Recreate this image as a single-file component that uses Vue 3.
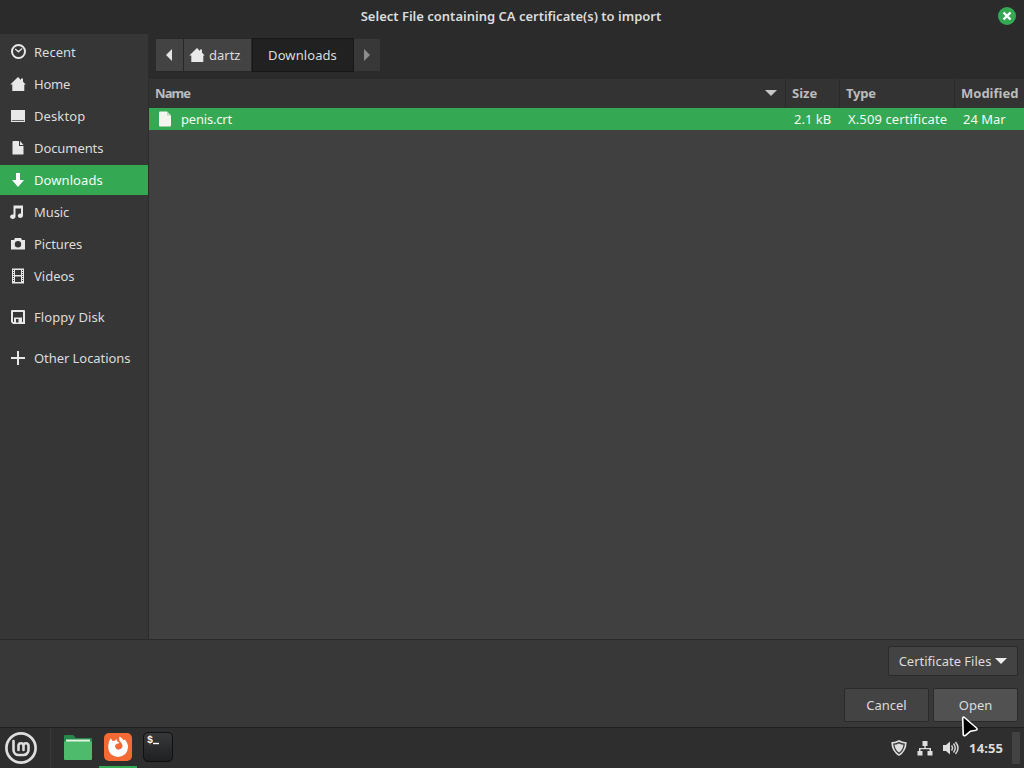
<template>
  <div class="screen">
    <header class="titlebar">
      <h1>Select File containing CA certificate(s) to import</h1>
      <button class="close" aria-label="Close">
        <svg width="18" height="18" viewBox="0 0 18 18">
          <circle cx="9" cy="9" r="9" fill="#35a854" />
          <path d="M5.500 5.500l7 7M12.500 5.500l-7 7" stroke="#fff" stroke-width="2.400" />
        </svg>
      </button>
    </header>

    <main class="chooser">
      <!-- Places -->
      <nav class="sidebar">
        <div
          v-for="place in places"
          :key="place.name"
          class="place"
          :class="{ selected: place.name === current, spaced: place.spaced }"
          @click="current = place.name"
        >
          <svg class="place-icon" width="16" height="16" viewBox="0 0 16 16">
            <path :d="place.icon" fill="currentColor" fill-rule="evenodd" />
          </svg>
          <span :style="{ letterSpacing: (place.ls || 0) + 'px' }">{{ place.name }}</span>
        </div>
      </nav>

      <section class="browser">
        <div class="pathbar">
          <button class="crumb arrow">
            <svg width="6" height="12" viewBox="0 0 6 12"><path d="M6 0v12L0 6z" fill="#e4e4e4" /></svg>
          </button>
          <button class="crumb home">
            <svg width="16" height="16" viewBox="0 0 16 16"><path :d="homeIcon" fill="#e8e8e8" /></svg>
            <span>dartz</span>
          </button>
          <button class="crumb active"><span>Downloads</span></button>
          <button class="crumb arrow last">
            <svg width="6" height="12" viewBox="0 0 6 12"><path d="M0 0v12l6-6z" fill="#8d8d8d" /></svg>
          </button>
        </div>

        <div class="files">
          <div class="row head">
            <div class="cell name">
              <span>Name</span>
              <svg width="12" height="6" viewBox="0 0 12 6"><path d="M0 0h12L6 6z" fill="#c8c8c8" /></svg>
            </div>
            <div class="cell">Size</div>
            <div class="cell type">Type</div>
            <div class="cell">Modified</div>
          </div>
          <div v-for="file in files" :key="file.name" class="row file">
            <div class="cell name">
              <svg width="12" height="16" viewBox="0 0 12 16">
                <path d="M0 1.500Q0 .5 1 .5h7l4 4V14.500q0 1-1 1H1q-1 0-1-1z" fill="#f3f5ee" />
                <path d="M8 .5l4 4H8z" fill="#b9d9b8" />
              </svg>
              <span>{{ file.name }}</span>
            </div>
            <div class="cell">{{ file.size }}</div>
            <div class="cell type">{{ file.type }}</div>
            <div class="cell">{{ file.modified }}</div>
          </div>
        </div>
      </section>
    </main>

    <footer class="actions">
      <button class="btn filter">
        <span>Certificate Files</span>
        <svg width="12" height="6" viewBox="0 0 12 6"><path d="M0 0h12L6 6z" fill="#eee" /></svg>
      </button>
      <div class="buttons">
        <button class="btn">Cancel</button>
        <button class="btn open">Open</button>
      </div>
    </footer>

    <!-- Panel -->
    <div class="panel">
      <div class="menu">
        <svg width="32" height="32" viewBox="0 0 32 32" fill="none" stroke="#dedede">
          <circle cx="16" cy="16" r="14.600" stroke-width="2.700" />
          <path d="M8.500 9v9a5 5 0 0 0 5 5h5a5 5 0 0 0 5-5v-4.300a2.500 2.500 0 0 0-5 0V18M18.500 13.700a2.500 2.500 0 0 0-5 0V18" stroke-width="2.600" stroke-linecap="round" />
        </svg>
      </div>
      <div class="launchers">
        <div class="launcher">
          <svg width="28" height="26" viewBox="0 0 28 26">
            <path d="M0 2q0-1 1-1h8l3 3h15q1 0 1 1v8H0z" fill="#25874a" />
            <rect x="2" y="5.500" width="24" height="4" rx=".5" fill="#e6f5e3" />
            <path d="M0 7.500h28V25q0 1-1 1H1q-1 0-1-1z" fill="#4dba6c" />
          </svg>
        </div>
        <div class="launcher running">
          <svg width="28" height="28" viewBox="0 0 28 28">
            <rect width="28" height="28" rx="5" fill="#f46a35" />
            <path d="M6.800 5.300L8.500 8 10.800 7.800 12.500 6 13.200 8.200 15.600 10 12 11.300Q10.500 12.500 11.300 14.600 12.500 17 15 16.600 18.500 16 18.600 12.600 18 9.800 15.300 7.500L15.300 3.500Q18 4.700 19.300 7L20.800 6.800Q24 9.800 24 14.300 23.300 23.500 14 23.900 4.700 23.400 4.200 14.500 4.300 8.500 6.800 5.300z" fill="#fff" />
          </svg>
        </div>
        <div class="launcher">
          <svg width="30" height="30" viewBox="0 0 30 30">
            <defs>
              <linearGradient id="term" x1="0" y1="0" x2="0" y2="1">
                <stop offset="0" stop-color="#37393a" />
                <stop offset="1" stop-color="#1d1f20" />
              </linearGradient>
            </defs>
            <rect x=".5" y=".5" width="29" height="29" rx="4.500" fill="url(#term)" stroke="#101112" />
            <text x="4" y="11" class="prompt">$</text>
            <path d="M10 11.500h6" stroke="#fff" stroke-width="1.400" />
          </svg>
        </div>
      </div>
      <div class="tray">
        <svg width="16" height="16" viewBox="0 0 16 16">
          <path d="M8 0Q11 2 15.700 2.200 15.500 11.500 8 16 .5 11.500.3 2.200 5 2 8 0z" fill="#dedede" />
          <path d="M8 2.600Q10.500 4 13.200 4.200 12.500 10.500 8 13.500 3.500 10.500 2.800 4.200 5.500 4 8 2.600z" fill="none" stroke="#3a3a3a" stroke-width="1.300" />
        </svg>
        <svg width="16" height="16" viewBox="0 0 16 16" fill="#dedede">
          <path d="M5.500 1h5v5H8.700v2H14v3h1.500v4.500h-5V11h2V9.300h-9V11h2v4.500h-5V11H2V8h5.300V6H5.500z" />
        </svg>
        <svg width="16" height="16" viewBox="0 0 16 16">
          <path d="M0 5h3l4-3.500v13L3 11H0z" fill="#dedede" />
          <path d="M8.500 5.500q2 2.500 0 5M10.500 3.500q3.500 4.500 0 9M12.500 2q5 6 0 12" fill="none" stroke="#d4d4d4" stroke-width="1.500" />
        </svg>
        <span class="clock">14:55</span>
      </div>
      <div class="corner"></div>
    </div>

    <svg class="pointer" width="20" height="24" viewBox="0 0 20 24">
      <path d="M2.700 3.300Q2.700 1.300 4.400 2.500L16.500 13Q18 14.700 15.800 15.200L10.500 16.200 5.600 20.300Q3.400 21.600 3.200 19.100z" fill="#000" stroke="#fff" stroke-width="1.600" stroke-linejoin="round" />
    </svg>
  </div>
</template>

<script setup>
import { ref } from 'vue'

const homeIcon = 'M8 1L.3 8.500h2V15h12V8.500h1.500L13 5.700V2.500h-2v1.400z'

const current = ref('Downloads')

// ls: letter spacing of the label
const places = [
  { name: 'Recent', icon: 'M8.500 0a7.500 7.500 0 1 1 0 15a7.500 7.500 0 1 1 0-15zM8.500 2a5.500 5.500 0 1 0 0 11a5.500 5.500 0 1 0 0-11zM5.500 4.500l3 2.300 3.300-2.800.7.900-4 3.800-3.700-3.100z' },
  { name: 'Home', ls: -0.2, icon: homeIcon },
  { name: 'Desktop', ls: 0.1, icon: 'M1 2h14v12H1zM1.800 12v.8h12.400V12z' },
  { name: 'Documents', ls: -0.08, icon: 'M3.500 1H9v5h4.500v8.500H2.500V2q0-1 1-1zM10 1l3.500 4H10z' },
  { name: 'Downloads', ls: 0.08, icon: 'M6 1h4v7h4L8 15 2 8h4z' },
  { name: 'Music', ls: -0.1, icon: 'M3.500 1.500h9.500v10.300a2.600 2.200 0 1 1-2-2.200V4.500H5.500v8.300a2.700 2.200 0 1 1-2-2.200z' },
  { name: 'Pictures', ls: -0.1, icon: 'M5 2h6l1 2h3v9.500H1V4h3zM8 5a3.200 3.200 0 1 0 0 6.400A3.200 3.200 0 1 0 8 5z' },
  { name: 'Videos', icon: 'M2 .5h12v15H2zM5 2v5h6V2zM5 8.500V14h6V8.500zM3 2v1h1V2zM3 4v1h1V4zM3 6v1h1V6zM3 8v1h1V8zM3 10v1h1v-1zM3 12v1h1v-1zM12 2v1h1V2zM12 4v1h1V4zM12 6v1h1V6zM12 8v1h1V8zM12 10v1h1v-1zM12 12v1h1v-1z' },
  { name: 'Floppy Disk', ls: 0.1, spaced: true, icon: 'M2 1h12q1 0 1 1v13H3l-2-2V2q0-1 1-1zM3 3v10h1V8.500h8V13h1V3zM6 10v3.500h2.500V10z' },
  { name: 'Other Locations', ls: -0.06, spaced: true, icon: 'M7 1h2v6h6v2H9v6H7V9H1V7h6z' }
]

const files = [
  { name: 'penis.crt', size: '2.1 kB', type: 'X.509 certificate', modified: '24 Mar' }
]
</script>

<style>
body {
  margin: 0;
  background: #2b2b2b;
}
</style>

<style scoped>
.screen {
  position: relative;
  display: flex;
  flex-direction: column;
  width: 1024px;
  height: 768px;
  overflow: hidden;
  background: #2b2b2b;
  color: #dcdcdc;
  font: 13px/18px "Noto Sans", "Open Sans", sans-serif;
  white-space: nowrap;
}

.screen * {
  box-sizing: border-box;
}

svg {
  display: block;
  flex: none;
}

button {
  padding: 0;
  border: 0;
  background: none;
  color: inherit;
  font: inherit;
}

.titlebar {
  display: grid;
  grid-template-columns: 1fr auto 1fr;
  align-items: center;
  height: 34px;
  padding: 0 8px 2px 6px;
}

h1 {
  grid-column: 2;
  margin: 0;
  font-size: 13px;
  font-weight: 600;
  line-height: 18px;
}

.close {
  justify-self: end;
}

.chooser {
  display: flex;
  height: 605px;
}

.sidebar {
  width: 149px;
  padding-top: 2px;
  border-right: 1px solid #2c2c2c;
  background: #363636;
}

.place {
  display: flex;
  align-items: center;
  gap: 8px;
  height: 30px;
  margin-bottom: 2px;
  padding-left: 10px;
}

.place:first-child {
  margin-top: 1px;
}

.place.spaced {
  margin-top: 11px;
}

.place.selected {
  background: #35a854;
  color: #f4fbf4;
}

.place-icon {
  color: #e8e8e8;
}

.place.selected .place-icon {
  color: #fff;
}

.browser {
  display: flex;
  flex: 1;
  flex-direction: column;
}

.pathbar {
  display: flex;
  height: 45px;
  padding: 4px 0 7px 7px;
}

.crumb {
  display: flex;
  align-items: center;
  justify-content: center;
  height: 34px;
  border: 1px solid #282828;
  border-left-width: 0;
  background: #434343;
}

.crumb.arrow {
  width: 28px;
  padding-right: 1px;
}

.crumb.home {
  justify-content: flex-start;
  gap: 4px;
  width: 68px;
  padding-left: 5px;
}

.crumb.active {
  width: 102px;
  padding-right: 1px;
  border-color: #171717;
  border-left-width: 1px;
  background: #212121;
  letter-spacing: 0.08px;
}

.crumb.last {
  width: 27px;
  padding-right: 0;
  border-color: #2b2b2b;
  background: #383838;
}

.files {
  flex: 1;
  background: #404040;
}

.row {
  display: grid;
  grid-template-columns: 637px 54px 115px 1fr;
}

.cell {
  display: flex;
  align-items: center;
}

.head {
  height: 29px;
  background: #333;
  color: #bcbcbc;
  font-weight: 700;
}

.head .cell {
  padding: 0 0 2px 6px;
  border-right: 1px solid #2a2a2a;
}

.head .name {
  justify-content: space-between;
  padding-right: 8px;
  letter-spacing: -0.9px;
}

.head .type {
  letter-spacing: -0.2px;
}

.head .cell:last-child {
  border-right: 0;
}

.file {
  height: 22px;
  background: #35a854;
  color: #f2faf2;
}

.file .name {
  gap: 10px;
  padding-left: 10px;
  letter-spacing: -0.2px;
}

.file .cell + .cell {
  padding-left: 8px;
}

.file .type {
  letter-spacing: 0.12px;
}

.actions {
  display: flex;
  flex-direction: column;
  align-items: flex-end;
  gap: 12px;
  height: 88px;
  padding: 6px 6px 0 0;
  border-top: 1px solid #292929;
  background: #383838;
}

.buttons {
  display: flex;
  gap: 4px;
}

.btn {
  display: flex;
  align-items: center;
  justify-content: center;
  width: 85px;
  height: 34px;
  border: 1px solid #2a2a2a;
  border-radius: 2px;
  background: #434343;
}

.btn.filter {
  gap: 4px;
  width: 130px;
  height: 30px;
}

.btn.open {
  background: #515151;
}

.panel {
  display: flex;
  align-items: center;
  height: 41px;
  border-top: 1px solid #202020;
  background: #2e2e2e;
}

.menu {
  display: flex;
  align-items: center;
  width: 51px;
  height: 40px;
  padding-left: 5px;
  border-right: 1px solid #393939;
}

.launchers {
  display: flex;
  height: 40px;
  padding-left: 8px;
}

.launcher {
  display: flex;
  align-items: center;
  justify-content: center;
  width: 38px;
  height: 40px;
  margin-right: 2px;
  border-bottom: 2px solid transparent;
}

.launcher.running {
  border-bottom-color: #35a854;
}

.prompt {
  fill: #fff;
  font: bold 10px "Liberation Mono", monospace;
}

.tray {
  display: flex;
  align-items: center;
  gap: 10px;
  margin-left: auto;
}

.clock {
  letter-spacing: 0.1px;
  font-weight: 700;
}

.corner {
  width: 8px;
  height: 32px;
  margin: 0 4px 0 9px;
  background: #424242;
}

.pointer {
  position: absolute;
  left: 960px;
  top: 715px;
}
</style>
